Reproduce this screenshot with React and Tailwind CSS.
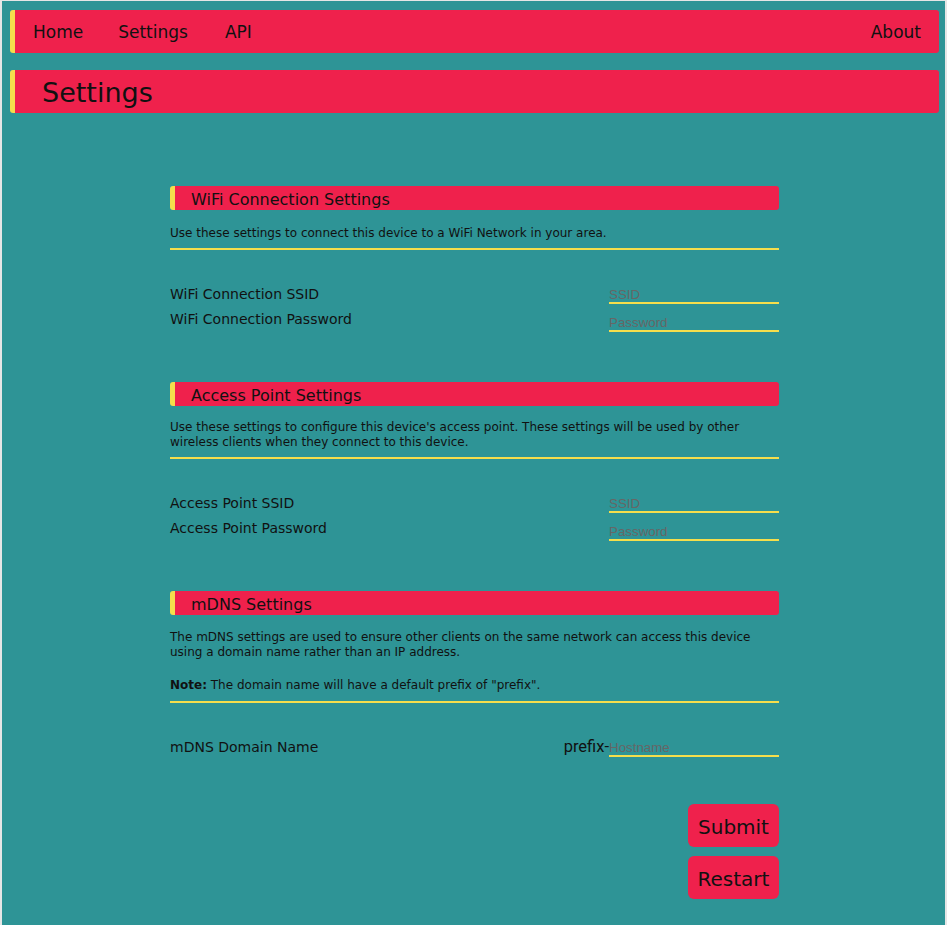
const font = { fontFamily: '"DejaVu Sans", Verdana, sans-serif' };

function SectionHeader({ title }) {
  return (
    <div className="h-[24px] flex items-center pt-[3px] bg-[#ef214c] border-l-[5px] border-[#f5de4c] rounded-[3px] pl-[16px] text-[16px] text-[#111]">
      {title}
    </div>
  );
}

function Field({ placeholder, type = "text" }) {
  return (
    <input
      type={type}
      placeholder={placeholder}
      className="w-[170px] h-[24px] pt-[7px] bg-transparent border-b-2 border-[#f5de4c] outline-none text-[13.33px] placeholder:text-[#666] text-[#111]"
      style={{ fontFamily: '"Liberation Sans", Arial, sans-serif' }}
    />
  );
}

function Rows({ labels, children }) {
  return (
    <div className="flex justify-between mt-[30px]">
      <div className="flex flex-col pt-[2px]">
        {labels.map((l) => (
          <div key={l} className="h-[25px] leading-[25px] text-[14px] text-[#111]">{l}</div>
        ))}
      </div>
      <div className="flex flex-col gap-[4px]">{children}</div>
    </div>
  );
}

export default function App() {
  return (
    <div
      className="min-h-[925px] bg-[#2e9496] border-t border-l-2 border-r-2 border-[#e6e6e6] pt-[9px] pl-[8px] pr-[6px] text-[#111]"
      style={font}
    >
      <nav className="h-[43px] flex items-center pt-[3px] bg-[#ef214c] border-l-[5px] border-[#f5de4c] rounded-[3px] pl-[18px] pr-[18px] text-[17px]">
        <a className="mr-[35px]">Home</a>
        <a className="mr-[37px]">Settings</a>
        <a>API</a>
        <a className="ml-auto">About</a>
      </nav>
      <div className="mt-[17px] h-[43px] flex items-center pt-[3px] bg-[#ef214c] border-l-[5px] border-[#f5de4c] rounded-[3px] pl-[27px] text-[27px]">
        Settings
      </div>

      <div className="w-[609px] ml-[160px] mt-[73px]">
        <SectionHeader title="WiFi Connection Settings" />
        <p className="text-[12px] leading-[15px] mt-[16px] pb-[7px] border-b-2 border-[#f5de4c]">
          Use these settings to connect this device to a WiFi Network in your area.
        </p>
        <Rows labels={["WiFi Connection SSID", "WiFi Connection Password"]}>
          <Field placeholder="SSID" />
          <Field placeholder="Password" type="password" />
        </Rows>

        <div className="mt-[50px]">
          <SectionHeader title="Access Point Settings" />
        </div>
        <p className="text-[12px] leading-[15px] mt-[14px] pb-[7px] border-b-2 border-[#f5de4c]">
          Use these settings to configure this device's access point. These settings will be used by other wireless clients when they connect to this device.
        </p>
        <Rows labels={["Access Point SSID", "Access Point Password"]}>
          <Field placeholder="SSID" />
          <Field placeholder="Password" type="password" />
        </Rows>

        <div className="mt-[50px]">
          <SectionHeader title="mDNS Settings" />
        </div>
        <div className="text-[12px] leading-[15px] mt-[15px] pb-[8px] border-b-2 border-[#f5de4c]">
          <p>The mDNS settings are used to ensure other clients on the same network can access this device using a domain name rather than an IP address.</p>
          <p className="mt-[18px]"><b>Note:</b> The domain name will have a default prefix of "prefix".</p>
        </div>
        <Rows labels={["mDNS Domain Name"]}>
          <div className="flex items-start ml-[-46px]">
            <span className="text-[16.5px] leading-[22px] pt-[3px]" style={{ fontFamily: 'Roboto, "Liberation Sans", sans-serif' }}>prefix-</span>
            <Field placeholder="Hostname" />
          </div>
        </Rows>

        <div className="flex flex-col items-end gap-[9px] mt-[44px]">
          <button className="w-[91px] h-[43px] pt-[2px] bg-[#ef214c] rounded-[6px] text-[20px] text-[#111]" style={font}>Submit</button>
          <button className="w-[91px] h-[43px] pt-[2px] bg-[#ef214c] rounded-[6px] text-[20px] text-[#111]" style={font}>Restart</button>
        </div>
      </div>
    </div>
  );
}
